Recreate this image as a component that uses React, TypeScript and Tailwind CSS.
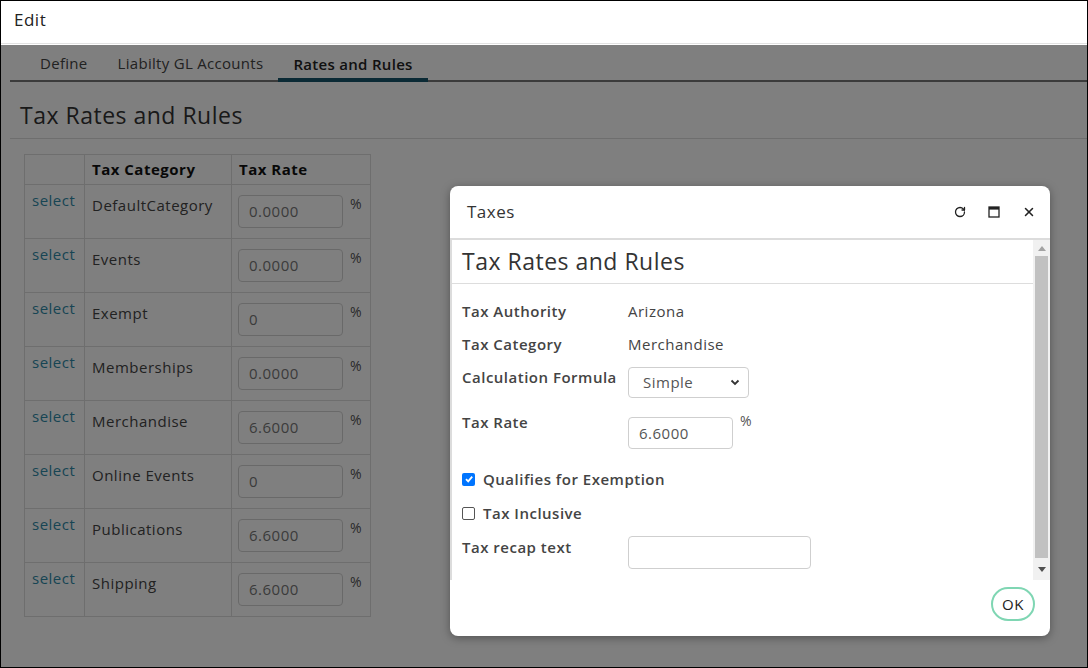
import { RotateCw, X } from "lucide-react";

const ROWS = [
  { name: "DefaultCategory", rate: "0.0000" },
  { name: "Events", rate: "0.0000" },
  { name: "Exempt", rate: "0" },
  { name: "Memberships", rate: "0.0000" },
  { name: "Merchandise", rate: "6.6000" },
  { name: "Online Events", rate: "0" },
  { name: "Publications", rate: "6.6000" },
  { name: "Shipping", rate: "6.6000" },
];

const FONT = "font-['Open_Sans',sans-serif]";

function MaxIcon() {
  return (
    <svg width="12" height="12" viewBox="0 0 12 12">
      <rect x="1" y="1" width="10" height="10" fill="none" stroke="#222" strokeWidth="1.3" />
      <rect x="1" y="1" width="10" height="2.6" fill="#222" />
    </svg>
  );
}

export default function App() {
  return (
    <div className={`relative w-[1088px] h-[668px] overflow-hidden border border-black bg-white text-[#333] tracking-[0.5px] ${FONT}`}>
      {/* top bar */}
      <div className="h-[43px] flex items-center pb-[5px] px-[13px] text-[17px] text-[#222] border-b border-[#e2e2e2]">Edit</div>

      {/* page under the overlay */}
      <div className="ml-[9px]">
        <div className="flex h-[38px] border-b-[2px] border-[#777] pl-[15px] tracking-[0.3px]">
          <div className="px-[15px] pt-[2px] flex items-center text-[15px] text-[#444]">Define</div>
          <div className="px-[15px] pt-[2px] flex items-center text-[15px] text-[#444]">Liabilty GL Accounts</div>
          <div className="px-[15px] flex items-center text-[15px] font-semibold text-[#222] border-b-[4px] border-[#16546a] -mb-[2px] pt-[6px]">
            Rates and Rules
          </div>
        </div>
        <div className="h-[57px] flex items-center pt-[10px] pl-[10px] text-[23px] text-[#333] border-b border-[#ddd]">Tax Rates and Rules</div>
      </div>

      <table className="ml-[23px] mt-[15px] border-collapse text-[15px]">
        <thead>
          <tr className="h-[30px]">
            <th className="w-[60px] border border-[#dcdcdc]"></th>
            <th className="w-[147px] border border-[#dcdcdc] text-left font-bold px-[7px] text-[#111]">Tax Category</th>
            <th className="w-[139px] border border-[#dcdcdc] text-left font-bold px-[7px] text-[#111]">Tax Rate</th>
          </tr>
        </thead>
        <tbody>
          {ROWS.map((r) => (
            <tr key={r.name} className="h-[54px]">
              <td className="border border-[#dcdcdc] align-top px-[7px] pt-[4px] text-[#2f8aa8]">select</td>
              <td className="border border-[#dcdcdc] align-top px-[7px] pt-[9px] text-[#444]">{r.name}</td>
              <td className="border border-[#dcdcdc] align-top pl-[6px] pt-[10px]">
                <div className="flex items-start">
                  <div className="w-[105px] h-[33px] border border-[#d2d2d2] rounded-[4px] flex items-center px-[10px] text-[#777]">{r.rate}</div>
                  <span className="ml-[7px] -mt-[2px] text-[14px] text-[#555]">%</span>
                </div>
              </td>
            </tr>
          ))}
        </tbody>
      </table>

      {/* backdrop */}
      <div className="absolute left-0 right-0 top-[44px] bottom-0 bg-black/50" />

      {/* dialog */}
      <div className="absolute left-[449px] top-[185px] w-[600px] h-[450px] bg-white rounded-[8px] shadow-[0_2px_10px_rgba(0,0,0,0.35)] flex flex-col overflow-hidden">
        <div className="h-[52px] shrink-0 flex items-center pl-[17px] pr-[14px] text-[17px] text-[#333]">
          <span>Taxes</span>
          <div className="ml-auto flex items-center gap-[22px]">
            <RotateCw size={12} strokeWidth={2.6} color="#222" />
            <MaxIcon />
            <X size={14} strokeWidth={2.6} color="#222" />
          </div>
        </div>

        <div className="h-[342px] shrink-0 flex border-t-2 border-l-2 border-[#dcdcdc]">
          <div className="flex-1 overflow-hidden">
            <div className="h-[44px] flex items-center pl-[10px] text-[23px] text-[#333] border-b border-[#ddd]">Tax Rates and Rules</div>
            <div className="pl-[10px] text-[15px]">
              <div className="mt-[11px] h-[33px] flex items-center">
                <span className="w-[166px] font-semibold text-[#444]">Tax Authority</span>
                <span className="text-[#444]">Arizona</span>
              </div>
              <div className="h-[33px] flex items-center">
                <span className="w-[166px] font-semibold text-[#444]">Tax Category</span>
                <span className="text-[#444]">Merchandise</span>
              </div>
              <div className="mt-[6px] flex items-start">
                <span className="w-[166px] leading-[20px] font-semibold text-[#444]">Calculation Formula</span>
                <div className="w-[121px] h-[31px] border border-[#cfcfcf] rounded-[4px] flex items-center pl-[14px] pr-[8px] text-[#555]">
                  <span>Simple</span>
                  <svg className="ml-auto" width="10" height="7" viewBox="0 0 10 7">
                    <path d="M1.5 1.5 L5 5 L8.5 1.5" fill="none" stroke="#333" strokeWidth="1.8" />
                  </svg>
                </div>
              </div>
              <div className="mt-[14px] flex items-start">
                <span className="w-[166px] leading-[20px] font-semibold text-[#444]">Tax Rate</span>
                <div className="mt-[5px] w-[105px] h-[32px] border border-[#cfcfcf] rounded-[4px] flex items-center px-[10px] text-[#555]">6.6000</div>
                <span className="ml-[7px] -mt-[1px] leading-[20px] text-[14px] text-[#555]">%</span>
              </div>
              <div className="mt-[16px] h-[28px] flex items-center gap-[8px]">
                <span className="w-[13px] h-[13px] rounded-[2px] bg-[#0075ff] flex items-center justify-center">
                  <svg width="10" height="10" viewBox="0 0 10 10">
                    <path d="M2 5.2 L4.2 7.4 L8.2 2.6" fill="none" stroke="#fff" strokeWidth="1.8" />
                  </svg>
                </span>
                <span className="font-semibold text-[#444]">Qualifies for Exemption</span>
              </div>
              <div className="mt-[6px] h-[28px] flex items-center gap-[8px]">
                <span className="w-[13px] h-[13px] rounded-[2px] border border-[#555] bg-white" />
                <span className="font-semibold text-[#444]">Tax Inclusive</span>
              </div>
              <div className="mt-[9px] flex items-start">
                <span className="w-[166px] mt-[1px] leading-[20px] font-semibold text-[#444]">Tax recap text</span>
                <div className="w-[183px] h-[33px] border border-[#cfcfcf] rounded-[4px]" />
              </div>
            </div>
          </div>
          {/* scrollbar */}
          <div className="w-[17px] bg-[#f1f1f1] flex flex-col items-center">
            <div className="h-[16px] flex items-center justify-center">
              <svg width="8" height="5" viewBox="0 0 8 5"><path d="M0 5 L4 0 L8 5 Z" fill="#a3a3a3" /></svg>
            </div>
            <div className="w-[13px] h-[302px] bg-[#c1c1c1]" />
            <div className="flex-1 flex items-center justify-center">
              <svg width="8" height="5" viewBox="0 0 8 5"><path d="M0 0 L4 5 L8 0 Z" fill="#505050" /></svg>
            </div>
          </div>
        </div>

        <div className="flex-1 flex justify-end items-start pt-[7px] pr-[15px]">
          <button className="w-[44px] h-[34px] rounded-full border-2 border-[#7fd6b3] text-[15px] text-[#222] flex items-center justify-center">OK</button>
        </div>
      </div>
    </div>
  );
}
